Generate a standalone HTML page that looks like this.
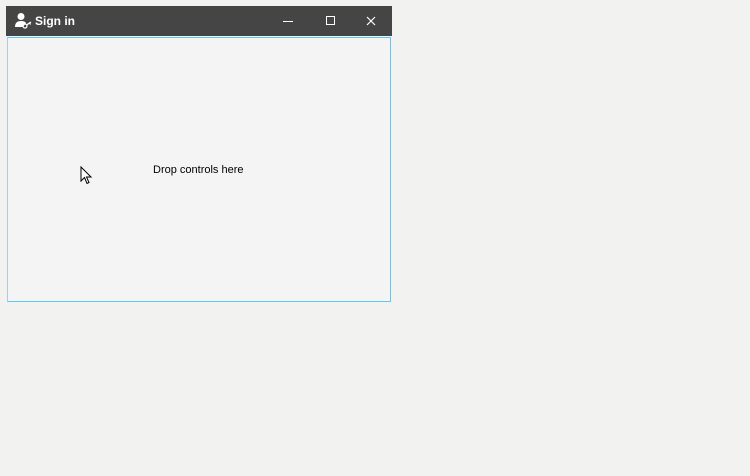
<!DOCTYPE html>
<html><head><style>
html,body{margin:0;padding:0;}
body{width:750px;height:476px;background:#f2f2f1;position:relative;overflow:hidden;font-family:"Liberation Sans",sans-serif;}
.tb{position:absolute;left:6px;top:6px;width:386px;height:30px;background:#454545;}
.tt{position:absolute;left:29px;top:8px;color:#fff;font-weight:bold;font-size:12px;}
.panel{position:absolute;left:7px;top:37px;width:382px;height:263px;background:#f4f4f4;border:1px solid #5ec8f2;border-left-color:#b8c8d0;}
.txt{position:absolute;left:153px;top:164px;font-size:11px;color:#000;}
</style></head><body>
<div class="tb">
<svg style="position:absolute;left:8px;top:6px" width="20" height="18" viewBox="0 0 20 18">
<circle cx="7" cy="4.5" r="3.5" fill="#fff"/>
<path d="M1 15 Q1 9 7 9 Q11 9 12 11 L9 15 Z" fill="#fff"/>
<circle cx="11" cy="14" r="2" fill="none" stroke="#fff" stroke-width="1.3"/>
<path d="M12.5 13 L17 10 M15.5 11 L16.5 12.5" stroke="#fff" stroke-width="1.3" fill="none"/>
</svg>
<div class="tt">Sign in</div>
<div style="position:absolute;left:277px;top:15px;width:10px;height:1px;background:#fff"></div>
<div style="position:absolute;left:320px;top:10px;width:7px;height:7px;border:1px solid #fff"></div>
<svg style="position:absolute;left:360px;top:10px" width="10" height="10" viewBox="0 0 10 10"><path d="M1 1L9 9M9 1L1 9" stroke="#fff" stroke-width="1.2"/></svg>
</div>
<div class="panel"></div>
<div class="txt">Drop controls here</div>
<svg style="position:absolute;left:80px;top:166px" width="14" height="20" viewBox="0 0 14 20">
<path d="M1 1 L1 15 L4.5 11.5 L7 17.5 L9 16.5 L6.5 11 L11 11 Z" fill="#fff" stroke="#000" stroke-width="1"/>
</svg>
</body></html>
